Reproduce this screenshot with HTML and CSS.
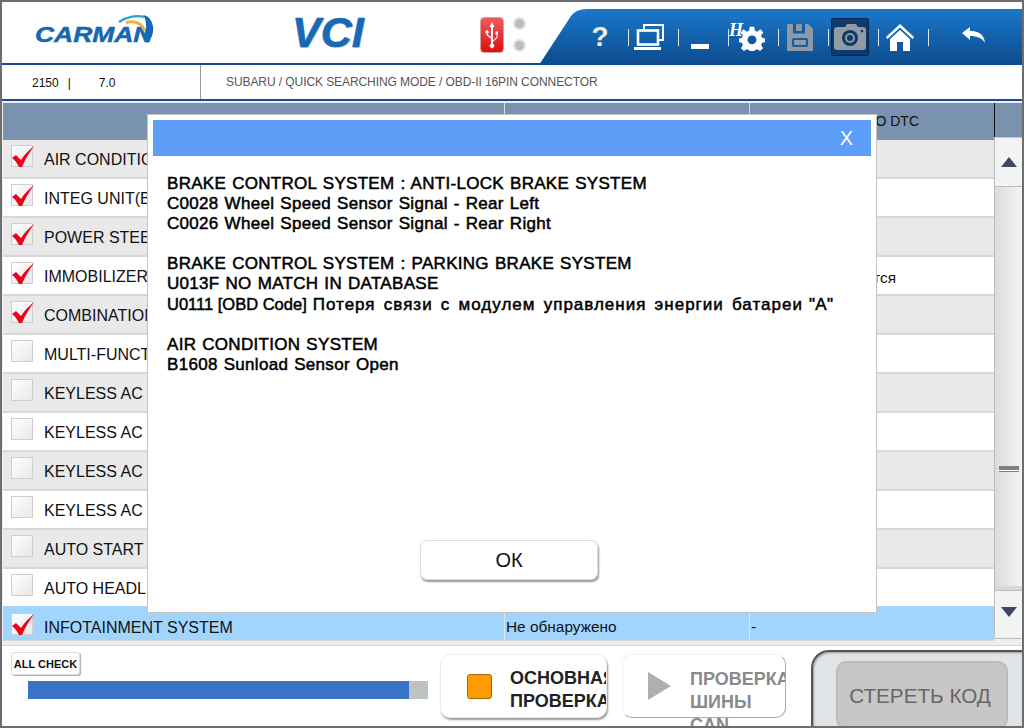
FILE: index.html
```html
<!DOCTYPE html>
<html lang="ru">
<head>
<meta charset="utf-8">
<title>VCI</title>
<link rel="stylesheet" href="styles.css">
</head>
<body>
<div class="app">
  <header class="header">
    <div class="logo">
      <span class="logo-text">CARMAN</span>
      <svg class="logo-arc" width="36" height="28" viewBox="0 0 36 28"><path d="M1 7C8 2 18 0 26 2" fill="none" stroke="#29a6c9" stroke-width="2.2"/><path d="M8 8C15 5 23 7 27 16" fill="none" stroke="#f0b040" stroke-width="3"/><path d="M25 0C33 1 36 10 35 17C34 23 31 26 29 28L26 20C29 14 29 6 25 0Z" fill="#1668b4"/></svg>
    </div>
    <div class="vci">VCI</div>
    <div class="usb">
      <svg width="14" height="28" viewBox="0 0 14 28"><path d="M7 1L9.5 6H8V19.5L11.5 16V13.5H10.5V10.5H13V13.5H12.5V16.5L8 21V23A2.2 2.2 0 1 1 6 23V18L1.5 14V12.5A1.6 1.6 0 1 1 2.8 12.5V13.5L6 16V6H4.5Z" fill="#fff"/></svg>
    </div>
    <div class="leds"><span class="led"></span><span class="led"></span></div>
    <nav class="toolbar">
      <div class="tool tool-help">?</div>
      <div class="tool"><svg width="32" height="28" viewBox="0 0 32 28"><path d="M10 7V2H29V17H24" fill="none" stroke="#fff" stroke-width="2"/><rect x="4" y="7.500" width="20" height="14" fill="none" stroke="#fff" stroke-width="2.600"/><rect x="0" y="24" width="27" height="3" fill="#fff"/></svg></div>
      <div class="tool"><svg width="20" height="28" viewBox="0 0 20 28"><rect x="1" y="21" width="18" height="5" fill="#fff"/></svg></div>
      <div class="tool tool-gear"><span class="gear-h">H</span><svg width="26" height="26" viewBox="0 0 28 28"><path d="M11.500 2H16.500L17.200 6.200L19.600 7.200L23 4.700L26.300 8L23.800 11.400L24.800 13.800L28 14.500V18.500L24.800 19.200L23.800 21.600L26 25L22.600 28L19.600 26L17.200 27L16.500 28H11.500L10.800 27L8.400 26L5.400 28L2 25L4.200 21.600L3.200 19.200L0 18.500V14.500L3.200 13.800L4.200 11.400L1.700 8L5 4.700L8.400 7.200L10.800 6.200Z" fill="#fff"/><circle cx="14" cy="16" r="4.800" fill="#0f5a9f"/></svg></div>
      <div class="tool"><svg width="26" height="27" viewBox="0 0 26 27"><path d="M1 0H21L26 5V27H0V1Z" fill="#8d99a6"/><rect x="6" y="0" width="3" height="9" fill="#125c9f"/><rect x="15" y="0" width="3" height="9" fill="#125c9f"/><rect x="6" y="7" width="12" height="2.500" fill="#125c9f"/><rect x="5" y="14" width="16" height="9" rx="2" fill="#125c9f"/><rect x="7" y="16" width="12" height="5" rx="1" fill="#8d99a6"/></svg></div>
      <div class="tool tool-active"><span class="camera-box"><svg width="32" height="26" viewBox="0 0 32 26"><path d="M11 3L13 0H22L24 3H29A3 3 0 0 1 32 6V23A3 3 0 0 1 29 26H3A3 3 0 0 1 0 23V6A3 3 0 0 1 3 3Z" fill="#929aa3"/><circle cx="16" cy="14" r="8" fill="#0c3a6c"/><circle cx="16" cy="14" r="5" fill="#929aa3"/><circle cx="16" cy="14" r="3" fill="#0c3a6c"/><circle cx="28" cy="7" r="1.300" fill="#0c3a6c"/></svg></span></div>
      <div class="tool"><svg width="28" height="27" viewBox="0 0 28 27"><path d="M14 0L28 13L26.500 15L14 3.500L1.500 15L0 13Z" fill="#fff"/><path d="M14 6L24 15V27H17V18H11V27H4V15Z" fill="#fff"/></svg></div>
      <div class="tool tool-back"><svg width="24" height="20" viewBox="0 0 24 20"><path d="M1 6L9 0V4C16 4 23 6 24 16C21 11 16 9 9 9V13Z" fill="#fff"/></svg></div>
    </nav>
  </header>

  <section class="info">
    <div class="info-version"><span>2150</span><span class="info-bar">|</span><span>7.0</span></div>
    <div class="info-path">SUBARU / QUICK SEARCHING MODE / OBD-II 16PIN CONNECTOR</div>
  </section>

  <main class="table">
    <div class="thead">
      <div class="col col-1"></div>
      <div class="col col-2"></div>
      <div class="col col-3 th-dtc">СВЕДЕНИЯ ПО DTC</div>
      <div class="th-end"></div>
    </div>
    <div class="tbody">
      <div class="rows">
        <div class="row"><div class="col col-1"><span class="check on"><svg class="tick" width="24" height="24" viewBox="0 0 24 24"><path d="M0 12L4 9L9 14C12 9 17 4 22 0C18 6 13 13 10 21H7C5 17 3 14 0 12Z" fill="#f00018"/></svg></span><span class="name">AIR CONDITION SYSTEM</span></div><div class="col col-2"></div><div class="col col-3"></div></div>
        <div class="row"><div class="col col-1"><span class="check on"><svg class="tick" width="24" height="24" viewBox="0 0 24 24"><path d="M0 12L4 9L9 14C12 9 17 4 22 0C18 6 13 13 10 21H7C5 17 3 14 0 12Z" fill="#f00018"/></svg></span><span class="name">INTEG UNIT(BODY)</span></div><div class="col col-2"></div><div class="col col-3"></div></div>
        <div class="row"><div class="col col-1"><span class="check on"><svg class="tick" width="24" height="24" viewBox="0 0 24 24"><path d="M0 12L4 9L9 14C12 9 17 4 22 0C18 6 13 13 10 21H7C5 17 3 14 0 12Z" fill="#f00018"/></svg></span><span class="name">POWER STEERING SYSTEM</span></div><div class="col col-2"></div><div class="col col-3"></div></div>
        <div class="row"><div class="col col-1"><span class="check on"><svg class="tick" width="24" height="24" viewBox="0 0 24 24"><path d="M0 12L4 9L9 14C12 9 17 4 22 0C18 6 13 13 10 21H7C5 17 3 14 0 12Z" fill="#f00018"/></svg></span><span class="name">IMMOBILIZER</span></div><div class="col col-2"></div><div class="col col-3 cell-text cell-note">Не поддерживается</div></div>
        <div class="row"><div class="col col-1"><span class="check on"><svg class="tick" width="24" height="24" viewBox="0 0 24 24"><path d="M0 12L4 9L9 14C12 9 17 4 22 0C18 6 13 13 10 21H7C5 17 3 14 0 12Z" fill="#f00018"/></svg></span><span class="name">COMBINATION METER</span></div><div class="col col-2"></div><div class="col col-3"></div></div>
        <div class="row"><div class="col col-1"><span class="check"></span><span class="name">MULTI-FUNCTION DISPLAY</span></div><div class="col col-2"></div><div class="col col-3"></div></div>
        <div class="row"><div class="col col-1"><span class="check"></span><span class="name">KEYLESS AC</span></div><div class="col col-2"></div><div class="col col-3"></div></div>
        <div class="row"><div class="col col-1"><span class="check"></span><span class="name">KEYLESS AC</span></div><div class="col col-2"></div><div class="col col-3"></div></div>
        <div class="row"><div class="col col-1"><span class="check"></span><span class="name">KEYLESS AC</span></div><div class="col col-2"></div><div class="col col-3"></div></div>
        <div class="row"><div class="col col-1"><span class="check"></span><span class="name">KEYLESS AC</span></div><div class="col col-2"></div><div class="col col-3"></div></div>
        <div class="row"><div class="col col-1"><span class="check"></span><span class="name">AUTO START STOP</span></div><div class="col col-2"></div><div class="col col-3"></div></div>
        <div class="row"><div class="col col-1"><span class="check"></span><span class="name">AUTO HEADLIGHT</span></div><div class="col col-2"></div><div class="col col-3"></div></div>
        <div class="row row-selected"><div class="col col-1"><span class="check on"><svg class="tick" width="24" height="24" viewBox="0 0 24 24"><path d="M0 12L4 9L9 14C12 9 17 4 22 0C18 6 13 13 10 21H7C5 17 3 14 0 12Z" fill="#f00018"/></svg></span><span class="name">INFOTAINMENT SYSTEM</span></div><div class="col col-2 cell-text">Не обнаружено</div><div class="col col-3 cell-text">-</div></div>
      </div>
      <div class="scrollbar">
        <div class="scroll-btn"><span class="arrow-up"></span></div>
        <div class="scroll-track"><span class="grip"></span></div>
        <div class="scroll-btn scroll-btn-down"><span class="arrow-down"></span></div>
      </div>
    </div>
  </main>

  <footer class="footer">
    <div class="progress-area">
      <button class="all-check">ALL CHECK</button>
      <div class="progress"><div class="progress-fill"></div></div>
    </div>
    <div class="action action-main">
      <span class="stop-icon"></span>
      <span class="action-label"><span>ОСНОВНАЯ</span><span>ПРОВЕРКА</span></span>
    </div>
    <div class="action action-off">
      <span class="play-icon"></span>
      <span class="action-label"><span>ПРОВЕРКА</span><span>ШИНЫ</span><span>CAN</span></span>
    </div>
    <div class="erase-panel"><div class="erase">СТЕРЕТЬ КОД</div></div>
  </footer>

  <div class="modal">
    <div class="modal-title"><span class="modal-close">X</span></div>
    <div class="modal-body">
      <p>BRAKE CONTROL SYSTEM : ANTI-LOCK BRAKE SYSTEM<br>C0028 Wheel Speed Sensor Signal - Rear Left<br>C0026 Wheel Speed Sensor Signal - Rear Right</p>
      <p>BRAKE CONTROL SYSTEM : PARKING BRAKE SYSTEM<br>U013F NO MATCH IN DATABASE<br><span class="tight">U0111 [OBD Code]</span> <span class="ru">Потеря связи с модулем управления энергии батареи</span> "A"</p>
      <p>AIR CONDITION SYSTEM<br>B1608 Sunload Sensor Open</p>
    </div>
    <div class="modal-actions"><button class="ok">ОК</button></div>
  </div>
</div>
</body>
</html>
```
FILE: styles.css
```css
* { box-sizing: border-box; }
html, body { margin: 0; padding: 0; }
body { font-family: "Liberation Sans", Arial, sans-serif; background: #fff; }

.app {
  position: relative;
  width: 1024px;
  height: 728px;
  border: 2px solid #6e6e6e;
  overflow: hidden;
  display: flex;
  flex-direction: column;
  background: #fff;
}

/* header */
.header {
  height: 63px;
  flex: none;
  display: flex;
  align-items: flex-start;
  border-bottom: 2px solid #1c4a8c;
}
.logo {
  position: relative;
  width: 118px;
  height: 28px;
  margin: 13px 0 0 33px;
  flex: none;
}
.logo-text {
  display: block;
  padding-top: 9px;
  font-size: 22px;
  line-height: 22px;
  font-weight: bold;
  font-style: italic;
  color: #1668b4;
  transform: scaleX(1.2);
  transform-origin: left;
  white-space: nowrap;
  -webkit-text-stroke: 0.5px #1668b4;
}
.logo-arc { position: absolute; left: 83px; top: 0; }
.vci {
  margin: 7px 0 0 139px;
  width: 74px;
  flex: none;
  font-size: 43px;
  line-height: 46px;
  font-weight: bold;
  font-style: italic;
  color: #1569b6;
  text-shadow: 1px 1px 1px #ccc;
  -webkit-text-stroke: 0.6px #1569b6;
}
.usb {
  margin: 15px 0 0 114px;
  width: 24px;
  height: 36px;
  flex: none;
  border-radius: 4px;
  background: linear-gradient(#f25a5a, #dd1010);
  border: 1px solid #d9a0a0;
  display: flex;
  align-items: center;
  justify-content: center;
}
.leds {
  margin: 15px 0 0 9px;
  width: 13px;
  flex: none;
  display: flex;
  flex-direction: column;
  gap: 9px;
}
.led {
  width: 13px;
  height: 13px;
  border-radius: 50%;
  background: #bdbdbd;
  border: 2px solid #e2e2e2;
}
.toolbar {
  margin: 7px 0 -2px 13px;
  flex: 1;
  height: 56px;
  display: flex;
  align-items: center;
  padding-left: 40px;
  color: #fff;
  background: linear-gradient(#1b78cb, #0c4b8d);
  clip-path: path("M0 56 L32 7 Q37 0 48 0 L500 0 L500 56 Z");
}
.tool {
  width: 50px;
  height: 38px;
  flex: none;
  display: flex;
  align-items: center;
  justify-content: center;
  padding-right: 8px;
  position: relative;
}
.tool::after {
  content: "";
  position: absolute;
  right: 0;
  top: 11px;
  height: 17px;
  width: 1px;
  background: #dfe8f2;
}
.tool-help { font-size: 28px; font-weight: bold; color: #f1efe4; }
.tool-gear { padding: 2px 14px 0 0; }
.gear-h {
  font-family: "Liberation Serif", serif;
  font-size: 18px;
  font-weight: bold;
  font-style: italic;
  margin: -16px -4px 0 0;
}
.camera-box {
  width: 38px;
  height: 38px;
  flex: none;
  display: flex;
  align-items: center;
  justify-content: center;
  background: #0c3a6c;
  border: 1px solid #07274c;
  border-radius: 2px;
}
.tool-back { margin-left: 23px; }
.tool-back::after { display: none; }

/* info line */
.info {
  height: 36px;
  flex: none;
  display: flex;
  border-bottom: 2px solid #1c4a8c;
}
.info-version {
  width: 199px;
  flex: none;
  padding: 11px 0 0 30px;
  font-size: 12px;
  line-height: 14px;
  color: #111;
  display: flex;
  border-right: 1px solid #999;
}
.info-bar { margin: 0 28px 0 9px; }
.info-path {
  padding: 10px 0 0 25px;
  font-size: 12px;
  line-height: 14px;
  letter-spacing: -0.08px;
  color: #555;
}

/* table */
.table {
  flex: none;
  padding: 2px 0 0 1px;
  height: 544px;
  background: #eee;
}
.thead {
  display: flex;
  height: 37px;
  background: #7892b0;
}
.col { height: 100%; flex: none; }
.col-1 { width: 501px; display: flex; align-items: center; }
.col-2 { width: 245px; border-left: 1px solid #d4dde6; }
.col-3 { width: 245px; border-left: 1px solid #d4dde6; }
.th-dtc {
  height: 34px;
  font-size: 14px;
  line-height: 36px;
  color: #111;
  text-align: right;
  padding-right: 75px;
  white-space: nowrap;
}
.th-end { width: 28px; height: 34px; border-left: 1px solid #111; }
.tbody { display: flex; }
.rows { width: 991px; flex: none; }
.row {
  height: 39px;
  display: flex;
  background: #fff;
  border-bottom: 2px solid #d8d8d8;
}
.row:nth-child(odd) { background: #e9e9e9; }
.row .col-2, .row .col-3 { border-left: 0; }
.row-selected, .row-selected:nth-child(odd) {
  height: 35px;
  margin-top: -2px;
  background: #a2d5fe;
  border-bottom: 1px solid #cfd8df;
}
.row-selected .col-2, .row-selected .col-3 { border-left: 1px solid #d4e8f8; }
.check {
  width: 22px;
  height: 22px;
  margin: -5px 11px 0 8px;
  flex: none;
  display: block;
  position: relative;
  background: linear-gradient(135deg, #fff, #e8e8e8);
  border: 1px solid #cfcfcf;
}
.tick { position: absolute; left: 0; top: 0; }
.name { padding-top: 2px; font-size: 16px; color: #111; white-space: nowrap; }
.row-selected .check { margin-top: 2px; }
.row-selected .name { padding-top: 9px; }
.cell-text {
  font-size: 15.400px;
  line-height: 42px;
  padding-left: 1px;
  color: #111;
  white-space: nowrap;
}
.cell-note { padding-left: 5px; }

/* scrollbar */
.scrollbar {
  width: 28px;
  flex: none;
  margin-top: -3px;
  height: 502px;
  display: flex;
  flex-direction: column;
  background: #f0f0f0;
  border-left: 1px solid #bdbdbd;
}
.scroll-btn {
  height: 50px;
  flex: none;
  display: flex;
  align-items: center;
  justify-content: center;
  background: #f2f3f3;
  border-top: 1px solid #c8c8c8;
  border-bottom: 1px solid #bdbdbd;
}
.scroll-btn-down { height: 49px; border-top: 1px solid #bdbdbd; }
.arrow-up {
  border-left: 8px solid transparent;
  border-right: 8px solid transparent;
  border-bottom: 10px solid #3e4766;
}
.arrow-down {
  margin-top: -6px;
  border-left: 8px solid transparent;
  border-right: 8px solid transparent;
  border-top: 10px solid #3e4766;
}
.scroll-track {
  flex: 1;
  display: flex;
  align-items: flex-start;
  justify-content: center;
  padding-top: 279px;
  background: linear-gradient(90deg, #dcdcdc, #f4f4f4);
  border-bottom: 4px solid #d8d8d8;
}
.grip {
  width: 20px;
  height: 6px;
  background: linear-gradient(#808080 0 4px, #fff 4px 5px, #808080 5px);
}

/* footer */
.footer {
  flex: 1;
  min-height: 0;
  display: flex;
  border-top: 1px solid #d8d8d8;
  background: #fff;
}
.progress-area { width: 438px; flex: none; }
.all-check {
  display: block;
  margin: 6px 0 0 9px;
  width: 69px;
  height: 23px;
  padding: 0;
  font-family: "Liberation Sans", sans-serif;
  font-size: 11px;
  font-weight: bold;
  color: #111;
  background: #fff;
  border: 1px solid #ddd;
  border-radius: 3px;
  box-shadow: 1px 1px 1px #aaa;
}
.progress {
  margin: 6px 0 0 26px;
  width: 400px;
  height: 18px;
  background: #bdc3c5;
}
.progress-fill { width: 381px; height: 100%; background: #3873c5; }
.action {
  width: 167px;
  height: 64px;
  margin-top: 8px;
  flex: none;
  display: flex;
  align-items: center;
  border-radius: 10px;
  background: #fff;
  overflow: hidden;
}
.action-main {
  padding-left: 26px;
  box-shadow: 1px 2px 2px #999;
  border: 1px solid #eee;
}
.action-main .action-label { margin-top: 8px; }
.action-off {
  width: 164px;
  margin-left: 15px;
  padding-left: 25px;
  overflow: visible;
  border: 1px solid #e4e4e4;
  border-top-color: #f2f2f2;
  border-left-color: #f2f2f2;
  border-bottom-color: #aaa;
  border-right-color: #aaa;
}
.stop-icon {
  width: 25px;
  height: 25px;
  flex: none;
  border-radius: 3px;
  background: #ff9a00;
  border: 1px solid #a06a10;
}
.play-icon {
  width: 0;
  height: 0;
  flex: none;
  border-left: 23px solid #b0aeae;
  border-top: 14px solid transparent;
  border-bottom: 14px solid transparent;
}
.action-label {
  display: flex;
  flex-direction: column;
  margin-left: 18px;
  font-size: 18px;
  line-height: 23px;
  font-weight: bold;
  color: #222;
  white-space: nowrap;
}
.action-off .action-label {
  width: 98px;
  margin-left: 19px;
  overflow: hidden;
  color: #8a8a8a;
  align-self: flex-start;
  margin-top: 13px;
  height: 70px;
}
.erase-panel {
  margin: 4px 0 0 25px;
  flex: 1;
  padding: 9px 14px 0 23px;
  background: #e2e5e7;
  border-top: 2px solid #555;
  border-left: 2px solid #555;
  border-top-left-radius: 18px;
  box-shadow: inset 1px 1px 2px #999;
}
.erase {
  height: 68px;
  padding: 21px 4px 0 0;
  text-align: center;
  font-size: 20.700px;
  line-height: 24px;
  color: #666;
  background: #c8c6c6;
  border: 2px solid #bbb;
  border-radius: 10px;
  white-space: nowrap;
}

/* modal */
.modal {
  position: absolute;
  left: 145px;
  top: 112px;
  width: 730px;
  height: 499px;
  background: #fff;
  border: 1px solid #c4c4c4;
  padding: 5px 5px 0 5px;
  display: flex;
  flex-direction: column;
}
.modal-title {
  height: 36px;
  flex: none;
  background: #5c9ef8;
  display: flex;
  align-items: center;
  justify-content: flex-end;
  padding-right: 18px;
}
.modal-close { color: #fff; font-size: 20px; line-height: 36px; }
.modal-body {
  padding: 18px 0 0 14px;
  height: 384px;
  flex: none;
  font-size: 17px;
  line-height: 20px;
  letter-spacing: 0.3px;
  word-spacing: 1px;
  color: #000;
  -webkit-text-stroke: 0.5px #000;
}
.modal-body p { margin: 0 0 20px; }
.tight { font-size: 16.500px; letter-spacing: 0; word-spacing: 0; }
.ru { letter-spacing: 1px; word-spacing: 2.500px; }
.modal-actions { display: flex; padding-left: 267px; }
.ok {
  width: 178px;
  height: 40px;
  padding: 0;
  font-family: "Liberation Sans", sans-serif;
  font-size: 20px;
  color: #111;
  background: #fff;
  border: 1px solid #ddd;
  border-radius: 7px;
  box-shadow: 1px 2px 2px #999;
}
```
